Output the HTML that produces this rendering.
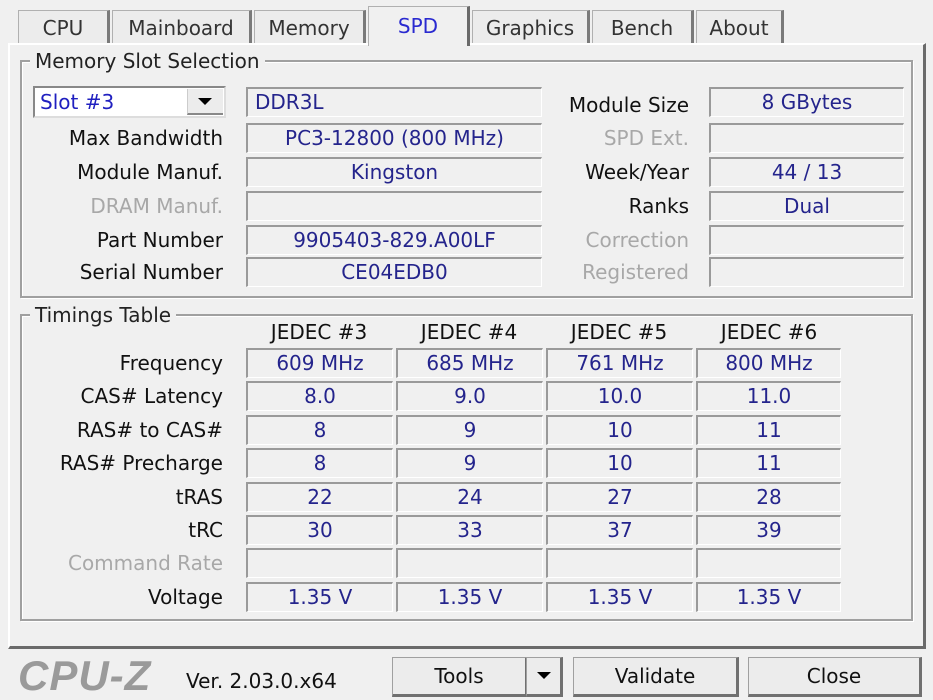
<!DOCTYPE html>
<html><head><meta charset="utf-8"><style>
body{margin:0;width:933px;height:700px;background:#f0f0f0;font-family:"DejaVu Sans","Liberation Sans",sans-serif;font-size:20px;color:#111;position:relative;overflow:hidden}
div{position:absolute;box-sizing:border-box;white-space:nowrap}
.tab{top:10px;height:34px;border:1px solid #b0b0b0;border-bottom:none;border-right:3px solid #7a7a7a;background:#ececec;text-align:center;line-height:34px;color:#333}
.sel{top:6px;height:40px;background:#f0f0f0;color:#2a2ad0;line-height:38px;z-index:2;border-right:3px solid #6a6a6a}
.grp{border:2px solid #a0a0a0;box-shadow:1px 1px 0 #fff inset,1px 1px 0 #fff}
.gl{background:#f0f0f0;padding:0 5px;line-height:22px;color:#222}
.f{height:30px;border-top:2px solid #9a9a9a;border-left:2px solid #9a9a9a;border-right:1px solid #fff;border-bottom:1px solid #fff;text-align:center;line-height:27px;color:#24248c}
.l{text-align:right;line-height:30px;height:30px;color:#111}
.g{color:#a8a8a8}
.h{text-align:center;line-height:24px;color:#111}
.btn{top:657px;height:40px;border:1px solid #a0a0a0;border-right:3px solid #707070;border-bottom:3px solid #707070;background:#ececec;text-align:center;line-height:36px}
</style></head><body>
<div class="tab" style="left:18px;width:92px">CPU</div>
<div class="tab" style="left:112px;width:140px">Mainboard</div>
<div class="tab" style="left:254px;width:112px">Memory</div>
<div class="tab" style="left:472px;width:118px">Graphics</div>
<div class="tab" style="left:592px;width:102px">Bench</div>
<div class="tab" style="left:696px;width:88px">About</div>
<div style="left:8px;top:43px;width:918px;height:606px;border-left:2px solid #fff;border-top:2px solid #fff;border-right:3px solid #6a6a6a;border-bottom:3px solid #6a6a6a"></div>
<div class="tab sel" style="left:368px;width:102px">SPD</div>

<div class="grp" style="left:20px;top:60px;width:893px;height:238px"></div>
<div class="gl" style="left:30px;top:50px">Memory Slot Selection</div>
<div style="left:33px;top:86px;width:193px;height:32px;border:2px solid #888;border-right-color:#ddd;border-bottom-color:#ddd;background:#fff;color:#2020c0;line-height:28px;padding-left:5px">Slot #3</div>
<div style="left:187px;top:89px;width:36px;height:26px;background:#ececec;border-left:1px solid #ccc;border-bottom:2px solid #888"><div style="left:10px;top:9px;width:0;height:0;border-left:7px solid transparent;border-right:7px solid transparent;border-top:7px solid #000"></div></div>
<div class="f" style="left:246px;top:87px;width:296px;text-align:left;padding-left:7px">DDR3L</div>
<div class="f" style="left:246px;top:123px;width:296px">PC3-12800 (800 MHz)</div>
<div class="f" style="left:246px;top:157px;width:296px">Kingston</div>
<div class="f" style="left:246px;top:191px;width:296px"></div>
<div class="f" style="left:246px;top:225px;width:296px">9905403-829.A00LF</div>
<div class="f" style="left:246px;top:257px;width:296px">CE04EDB0</div>
<div class="l" style="left:30px;top:123px;width:193px">Max Bandwidth</div>
<div class="l" style="left:30px;top:157px;width:193px">Module Manuf.</div>
<div class="l g" style="left:30px;top:191px;width:193px">DRAM Manuf.</div>
<div class="l" style="left:30px;top:225px;width:193px">Part Number</div>
<div class="l" style="left:30px;top:257px;width:193px">Serial Number</div>
<div class="l" style="left:540px;top:90px;width:149px">Module Size</div>
<div class="l g" style="left:540px;top:123px;width:149px">SPD Ext.</div>
<div class="l" style="left:540px;top:157px;width:149px">Week/Year</div>
<div class="l" style="left:540px;top:191px;width:149px">Ranks</div>
<div class="l g" style="left:540px;top:225px;width:149px">Correction</div>
<div class="l g" style="left:540px;top:257px;width:149px">Registered</div>
<div class="f" style="left:709px;top:87px;width:195px">8 GBytes</div>
<div class="f" style="left:709px;top:123px;width:195px"></div>
<div class="f" style="left:709px;top:157px;width:195px">44 / 13</div>
<div class="f" style="left:709px;top:191px;width:195px">Dual</div>
<div class="f" style="left:709px;top:225px;width:195px"></div>
<div class="f" style="left:709px;top:257px;width:195px"></div>

<div class="grp" style="left:20px;top:314px;width:893px;height:307px"></div>
<div class="gl" style="left:30px;top:304px">Timings Table</div>
<div class="h" style="left:246px;top:320px;width:146px">JEDEC #3</div>
<div class="h" style="left:396px;top:320px;width:146px">JEDEC #4</div>
<div class="h" style="left:546px;top:320px;width:146px">JEDEC #5</div>
<div class="h" style="left:696px;top:320px;width:146px">JEDEC #6</div>

<div class="l" style="left:30px;top:348px;width:193px">Frequency</div>
<div class="l" style="left:30px;top:381px;width:193px">CAS# Latency</div>
<div class="l" style="left:30px;top:415px;width:193px">RAS# to CAS#</div>
<div class="l" style="left:20px;top:448px;width:203px">RAS# Precharge</div>
<div class="l" style="left:30px;top:482px;width:193px">tRAS</div>
<div class="l" style="left:30px;top:515px;width:193px">tRC</div>
<div class="l g" style="left:30px;top:548px;width:193px">Command Rate</div>
<div class="l" style="left:30px;top:582px;width:193px">Voltage</div>

<div class="f" style="left:246px;top:348px;width:147px">609 MHz</div><div class="f" style="left:396px;top:348px;width:147px">685 MHz</div><div class="f" style="left:546px;top:348px;width:147px">761 MHz</div><div class="f" style="left:696px;top:348px;width:145px">800 MHz</div>
<div class="f" style="left:246px;top:381px;width:147px">8.0</div><div class="f" style="left:396px;top:381px;width:147px">9.0</div><div class="f" style="left:546px;top:381px;width:147px">10.0</div><div class="f" style="left:696px;top:381px;width:145px">11.0</div>
<div class="f" style="left:246px;top:415px;width:147px">8</div><div class="f" style="left:396px;top:415px;width:147px">9</div><div class="f" style="left:546px;top:415px;width:147px">10</div><div class="f" style="left:696px;top:415px;width:145px">11</div>
<div class="f" style="left:246px;top:448px;width:147px">8</div><div class="f" style="left:396px;top:448px;width:147px">9</div><div class="f" style="left:546px;top:448px;width:147px">10</div><div class="f" style="left:696px;top:448px;width:145px">11</div>
<div class="f" style="left:246px;top:482px;width:147px">22</div><div class="f" style="left:396px;top:482px;width:147px">24</div><div class="f" style="left:546px;top:482px;width:147px">27</div><div class="f" style="left:696px;top:482px;width:145px">28</div>
<div class="f" style="left:246px;top:515px;width:147px">30</div><div class="f" style="left:396px;top:515px;width:147px">33</div><div class="f" style="left:546px;top:515px;width:147px">37</div><div class="f" style="left:696px;top:515px;width:145px">39</div>
<div class="f" style="left:246px;top:548px;width:147px"></div><div class="f" style="left:396px;top:548px;width:147px"></div><div class="f" style="left:546px;top:548px;width:147px"></div><div class="f" style="left:696px;top:548px;width:145px"></div>
<div class="f" style="left:246px;top:582px;width:147px">1.35 V</div><div class="f" style="left:396px;top:582px;width:147px">1.35 V</div><div class="f" style="left:546px;top:582px;width:147px">1.35 V</div><div class="f" style="left:696px;top:582px;width:145px">1.35 V</div>

<div style="left:18px;top:653px;font-family:'Liberation Sans',sans-serif;font-size:42px;font-weight:bold;font-style:italic;color:#9a9a9a;line-height:46px;letter-spacing:1px">CPU-Z</div>
<div style="left:186px;top:666px;line-height:30px;color:#111">Ver. 2.03.0.x64</div>
<div class="btn" style="left:392px;width:136px">Tools</div>
<div class="btn" style="left:526px;width:37px"><div style="left:10px;top:14px;width:0;height:0;border-left:7px solid transparent;border-right:7px solid transparent;border-top:7px solid #000"></div></div>
<div class="btn" style="left:573px;width:166px">Validate</div>
<div class="btn" style="left:748px;width:174px">Close</div>
</body></html>
